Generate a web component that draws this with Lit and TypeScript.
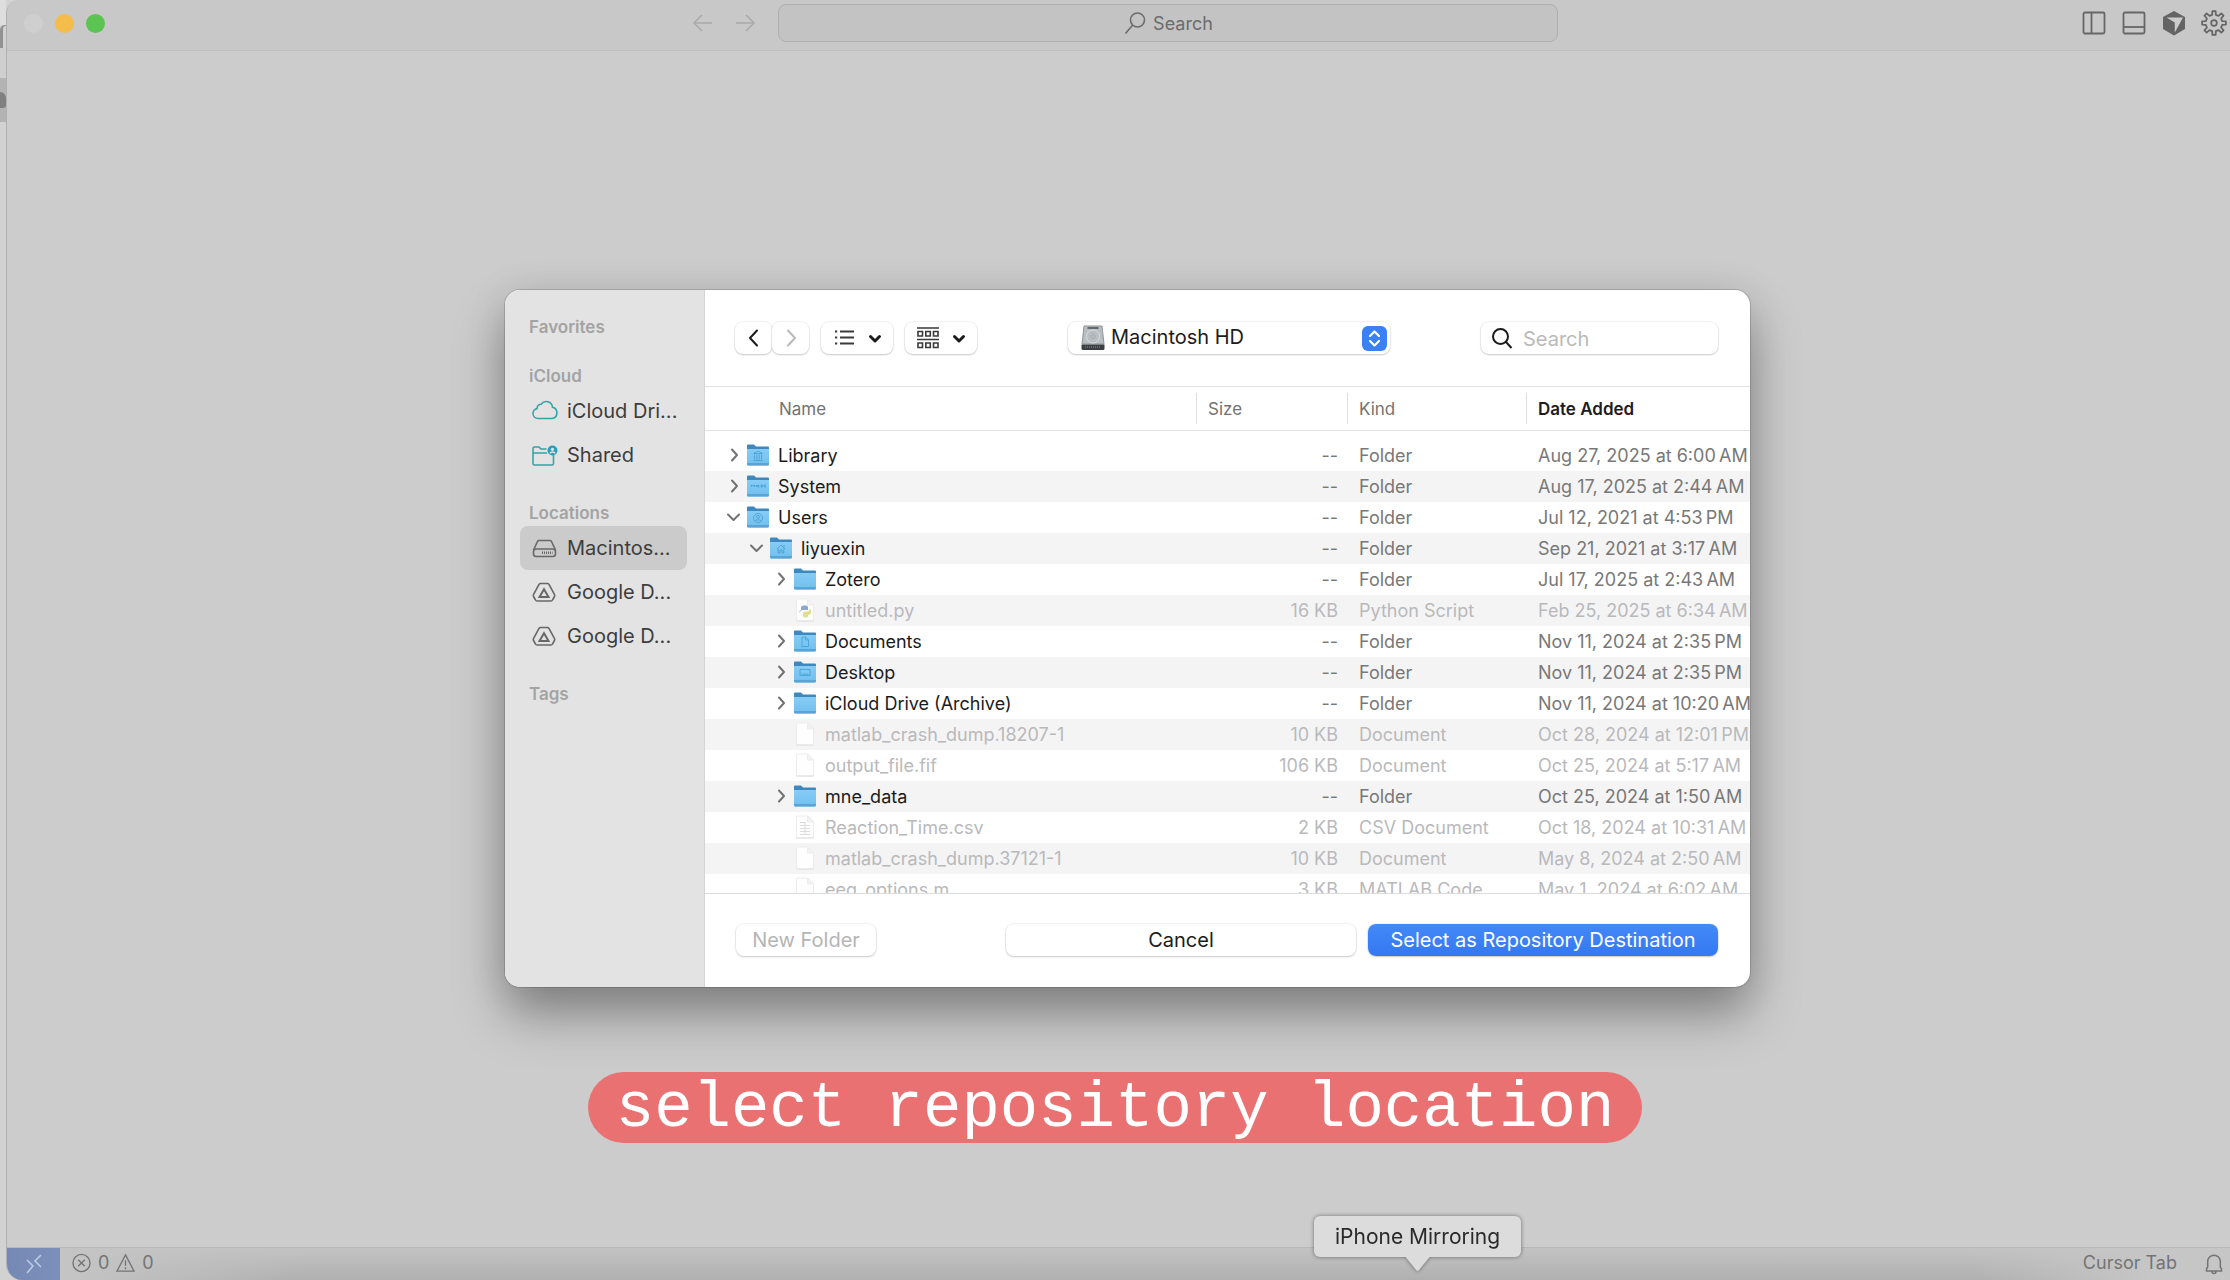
import { LitElement, html, css, svg, nothing } from "lit";
import { customElement, property } from "lit/decorators.js";
import { classMap } from "lit/directives/class-map.js";

type Emblem = "library" | "system" | "users" | "home" | "documents" | "desktop" | "none";
type FileType = "folder" | "python" | "blank" | "lines" | "code";

interface Entry {
  name: string;
  level: number;
  type: FileType;
  emblem?: Emblem;
  open?: boolean;
  size: string;
  kind: string;
  date: string;
  half: "AM" | "PM";
}

const folder = (
  name: string, level: number, date: string, half: "AM" | "PM",
  emblem: Emblem = "none", open = false,
): Entry => ({ name, level, type: "folder", emblem, open, size: "--", kind: "Folder", date, half });

const file = (
  name: string, type: FileType, size: string, kind: string, date: string, half: "AM" | "PM",
): Entry => ({ name, level: 2, type, size, kind, date, half });

const ENTRIES: Entry[] = [
  folder("Library", 0, "Aug 27, 2025 at 6:00", "AM", "library"),
  folder("System", 0, "Aug 17, 2025 at 2:44", "AM", "system"),
  folder("Users", 0, "Jul 12, 2021 at 4:53", "PM", "users", true),
  folder("liyuexin", 1, "Sep 21, 2021 at 3:17", "AM", "home", true),
  folder("Zotero", 2, "Jul 17, 2025 at 2:43", "AM"),
  file("untitled.py", "python", "16 KB", "Python Script", "Feb 25, 2025 at 6:34", "AM"),
  folder("Documents", 2, "Nov 11, 2024 at 2:35", "PM", "documents"),
  folder("Desktop", 2, "Nov 11, 2024 at 2:35", "PM", "desktop"),
  folder("iCloud Drive (Archive)", 2, "Nov 11, 2024 at 10:20", "AM"),
  file("matlab_crash_dump.18207-1", "blank", "10 KB", "Document", "Oct 28, 2024 at 12:01", "PM"),
  file("output_file.fif", "blank", "106 KB", "Document", "Oct 25, 2024 at 5:17", "AM"),
  folder("mne_data", 2, "Oct 25, 2024 at 1:50", "AM"),
  file("Reaction_Time.csv", "lines", "2 KB", "CSV Document", "Oct 18, 2024 at 10:31", "AM"),
  file("matlab_crash_dump.37121-1", "blank", "10 KB", "Document", "May 8, 2024 at 2:50", "AM"),
  file("eeg_options.m", "code", "3 KB", "MATLAB Code", "May 1, 2024 at 6:02", "AM"),
];

const gearPath = (teeth: number): string => {
  const step = (Math.PI * 2) / teeth;
  const pts: string[] = [];
  for (let i = 0; i < teeth; i++) {
    const a = i * step - Math.PI / 2;
    for (const [off, r] of [[-0.28, 8.4], [-0.17, 12], [0.17, 12], [0.28, 8.4]]) {
      const t = a + off * step;
      pts.push(`${(13 + r * Math.cos(t)).toFixed(2)} ${(13 + r * Math.sin(t)).toFixed(2)}`);
    }
  }
  return `M${pts.join("L")}Z`;
};

const emblemShape = (emblem: Emblem) => {
  switch (emblem) {
    case "library":
      return svg`<path d="M7 9.500 11.500 7 16 9.500ZM8 10.500v5M10.300 10.500v5M12.700 10.500v5M15 10.500v5M7 16.500h9"/>`;
    case "system":
      return svg`<path d="M5 12v-2l1.500 1 1.500-1v2M9.500 12v-1.500h1.500V12M13 10.500h-1.500V12H13M14.500 10h1.500v2h-1.500ZM19 10h-1.500v1H19v1h-1.500"/>`;
    case "users":
      return svg`<circle cx="11.500" cy="12" r="4.500"/><circle cx="11.500" cy="10.800" r="1.500"/><path d="M8.700 15c.8-1.600 4.800-1.600 5.600 0"/>`;
    case "home":
      return svg`<path d="M7.500 12 11.500 8l4 4M8.700 11.500V16h1.800v-3h2v3h1.800v-4.500M14.500 8v2"/>`;
    case "documents":
      return svg`<path d="M8.500 7h3.700L15 9.800V16.500H8.500ZM12 7v3h3"/>`;
    case "desktop":
      return svg`<path d="M6.500 8.500h10v6h-10ZM8 13.200h7"/>`;
    default:
      return nothing;
  }
};

@customElement("file-icon")
export class FileIcon extends LitElement {
  static styles = css`
    :host { display: block; width: 24px; height: 24px; }
    svg { display: block; width: 24px; height: 24px; }
    .emblem { fill: none; stroke: #3f9bd0; stroke-width: 1; opacity: 0.75; }
    .page { fill: #fefefe; stroke: #ececee; stroke-width: 1; }
    .fold { fill: #f3f3f4; stroke: #ececee; stroke-width: 1; }
    .base { fill: none; stroke: #dedee0; stroke-width: 1; }
    .mark { fill: none; stroke: #dcdcde; stroke-width: 1; }
  `;

  @property() type: FileType = "blank";
  @property() emblem: Emblem = "none";

  render() {
    if (this.type === "folder") {
      return html`<svg viewBox="0 0 24 24" aria-hidden="true">
        <defs><linearGradient id="front" x1="0" y1="0" x2="0" y2="1">
          <stop offset="0" stop-color="#86ccf5" /><stop offset="1" stop-color="#70bfef" />
        </linearGradient></defs>
        <path d="M1 2.500a1 1 0 0 1 1-1h6l2 2h12a1 1 0 0 1 1 1v6H1Z" fill="#3f88bd" />
        <path d="M1 6h22v15a1.500 1.500 0 0 1-1.500 1.500h-19A1.500 1.500 0 0 1 1 21Z" fill="url(#front)" />
        <path d="M1 20h22v1a1.500 1.500 0 0 1-1.500 1.500h-19A1.500 1.500 0 0 1 1 21Z" fill="#5aa4d3" />
        <g class="emblem" transform="translate(.5 1)">${emblemShape(this.emblem)}</g>
      </svg>`;
    }
    return html`<svg viewBox="0 0 24 24" aria-hidden="true">
      <path class="page" d="M3.500 1h11l6 6v16h-17Z" />
      <path class="fold" d="M14.500 1v6h6Z" />
      <path class="base" d="M3.500 23h17" />
      ${this.type === "python"
        ? svg`<path d="M8 12V9.500q0-2 3-2h2q2 0 2 2V12H9.500Q7 12 7 14.500V15Q5.500 13 8 12Z" fill="#8fa6d2"/>
            <path d="M10 18v-2.500q0-2 2-2h2.500q1.500 0 2-3 2.500 1.500 1 5.500-.5 1-2.500 1v1q0 1.500-2.500 1.500T10 18Z" fill="#dfe08d"/>`
        : nothing}
      ${this.type === "lines"
        ? svg`<path class="mark" d="M7 7.500h6M7 10.500h10M7 13.500h10M7 16.500h10M7 19.500h10M12 7v13"/>`
        : nothing}
    </svg>`;
  }
}

@customElement("file-table")
export class FileTable extends LitElement {
  static styles = css`
    :host { display: block; height: 506px; overflow: hidden; }
    .files { width: 100%; table-layout: fixed; border-collapse: separate; border-spacing: 0; }
    .c-size { width: 151px; }
    .c-kind { width: 179px; }
    .c-date { width: 224px; }
    th, td { box-sizing: border-box; padding: 0; white-space: nowrap; text-align: left; overflow: hidden; }
    th { height: 44px; padding-left: 12px; border-bottom: 1px solid #e2e2e2; color: #737373;
      font-size: 17px; line-height: 22px; font-weight: 400;
      background: linear-gradient(#dedede, #dedede) 0 50% / 1px 31px no-repeat; }
    th.first { padding-left: 74px; background: none; }
    th.sorted { color: #1d1d1d; font-weight: 600; }
    tbody::before { content: "\\200b"; display: block; line-height: 9px; font-size: 1px; }
    td { height: 31px; padding: 0 0 1px 12px; color: #787878; font-size: 18px; line-height: 29px; }
    tr.entry:nth-child(even) td { background: #f4f4f5; }
    td.name { padding-left: 19px; color: #1b1b1b; }
    td.size { padding: 0 9px 1px 0; text-align: right; }
    tr.disabled td { color: #b9b9bb; }
    .line { display: flex; align-items: center; height: 30px; }
    .level-1 { padding-left: 23px; }
    .level-2 { padding-left: 47px; }
    .twist { width: 21px; height: 20px; padding: 0; margin-right: 1px; border: 0; background: none; }
    .twist svg { display: block; width: 20px; height: 20px; }
    .twist path { fill: none; stroke: #727272; stroke-width: 2; stroke-linecap: round; stroke-linejoin: round; }
    .blank { width: 22px; }
    .label { margin-left: 8px; }
  `;

  private row(e: Entry) {
    const isFolder = e.type === "folder";
    return html`<tr class=${classMap({ entry: true, disabled: !isFolder })}>
      <td class="name">
        <div class="line level-${e.level}">
          ${isFolder
            ? html`<button class="twist" aria-label=${`Expand ${e.name}`} aria-expanded=${e.open ? "true" : "false"}>
                <svg viewBox="0 0 20 20"><path d=${e.open ? "M4 7.500 9.500 13l5.500-5.500" : "M8 4.500 13 10l-5 5.500"} /></svg>
              </button>`
            : html`<span class="blank"></span>`}
          <file-icon .type=${e.type} .emblem=${e.emblem ?? "none"}></file-icon>
          <span class="label">${e.name}</span>
        </div>
      </td>
      <td class="size">${e.size}</td>
      <td>${e.kind}</td>
      <td>${e.date}\u2009${e.half}</td>
    </tr>`;
  }

  render() {
    return html`<table class="files">
      <colgroup><col /><col class="c-size" /><col class="c-kind" /><col class="c-date" /></colgroup>
      <thead><tr>
        <th class="first" scope="col">Name</th>
        <th scope="col">Size</th>
        <th scope="col">Kind</th>
        <th class="sorted" scope="col">Date Added</th>
      </tr></thead>
      <tbody>${ENTRIES.map((e) => this.row(e))}</tbody>
    </table>`;
  }
}

const cloudIcon = svg`<path d="M7 20.500a5 5 0 0 1-1-9.900 4 4 0 0 1 4.200-4.300 6.200 6.200 0 0 1 11.300 3 5.700 5.700 0 0 1-.5 11.200Z"/>`;
const sharedIcon = svg`<path d="M22.500 13v8.500a1.500 1.500 0 0 1-1.500 1.500H3.500A1.500 1.500 0 0 1 2 21.500v-15A1.500 1.500 0 0 1 3.500 5H8l2 2h5.500M2 11h14"/>
  <circle cx="21.500" cy="8.500" r="5" fill="#2f9db2" stroke="none"/>
  <circle cx="21.500" cy="7.300" r="1.600" fill="#e3e3e3" stroke="none"/><path d="M19 11.400c.8-1.800 4.200-1.800 5 0" stroke="#e3e3e3"/>`;
const driveIcon = svg`<path d="M2.500 15 6.500 6.500Q7 5.500 8.200 5.500h10.600q1.200 0 1.700 1L24.500 15"/>
  <rect x="2.500" y="14" width="22" height="7.500" rx="2.800"/><path d="M11 17.700h10.500" stroke-dasharray="1 1" stroke-width="2.500"/>`;
const googleIcon = svg`<path d="M9.500 4.500h7q1 0 1.500 1l5.500 10q.5 1 0 2l-2 3.500q-.5 1-1.500 1H6q-1 0-1.500-1l-2-3.500q-.5-1 0-2L8 5.500q.5-1 1.500-1Z"/>
  <path d="M13 10.300 17.500 18h-9Z" stroke-width="2"/>`;

@customElement("app-root")
export class AppRoot extends LitElement {
  static styles = css`
    :host { display: flex; position: relative; min-height: 100vh; overflow: hidden; background: #d2d2d2;
      font-family: Inter, "Liberation Sans", sans-serif; color: #1b1b1b; }
    *, *::before, *::after { box-sizing: border-box; }
    button, input, select { font: inherit; color: inherit; margin: 0; }
    svg { display: block; fill: none; stroke: currentColor; }

    .behind { display: flex; flex-direction: column; width: 6px; flex: none; }
    .behind-top { height: 25px; background: #dedede; }
    .behind-tab { height: 23px; border: solid #929292; border-width: 1px 0 0 3px; border-radius: 5px 0 0 0; }
    .behind-gap { height: 30px; background: #cfcfcf; }
    .behind-row { display: flex; align-items: center; height: 44px; background: #b3b3b3; overflow: hidden; }
    .behind-dot { width: 6px; height: 16px; border-radius: 0 8px 4px 0; background: #808080; }

    .window { display: flex; flex-direction: column; flex: 1; min-width: 0; background: #cccccc;
      border-left: 1px solid #b0b0b0; border-radius: 14px 0 0 16px; overflow: hidden; }

    .titlebar { display: grid; grid-template-columns: 771fr 781fr 672fr; align-items: center;
      height: 51px; padding-bottom: 4px; background: #c8c8c8; border-bottom: 1px solid #bfbfbf; color: #686868; }
    .title-left { display: flex; align-items: center; justify-content: space-between; padding: 0 21px 0 17px; }
    .lights { display: flex; gap: 12px; }
    .light { width: 19px; height: 19px; padding: 0; border: 0; border-radius: 50%; }
    .close { background: #cfcfcf; }
    .minimize { background: #f4bd4b; }
    .zoom { background: #5cc452; }
    .nav { display: flex; gap: 18px; color: #a9a9a9; }
    .plain { padding: 0; border: 0; background: none; color: inherit; }
    .nav svg { width: 24px; height: 24px; stroke-width: 1.5; }
    .command { display: flex; align-items: center; justify-content: center; gap: 6px; height: 38px;
      border: 1px solid #aeaeae; border-radius: 8px; background: #c3c3c3; font-size: 18px; color: #6c6c6c; }
    .command svg { width: 24px; height: 24px; stroke-width: 1.6; }
    .title-right { display: flex; justify-content: flex-end; gap: 14px; padding-right: 3px; color: #666666; }
    .title-right svg { width: 26px; height: 26px; stroke-width: 1.8; }

    .workspace { flex: 1; display: grid; grid-template-columns: 498fr 1245fr 480fr; align-items: start; padding-top: 239px; }
    .dialog { grid-column: 2; display: flex; border-radius: 15px; overflow: hidden; background: #ffffff;
      box-shadow: 0 0 0 1px rgba(0, 0, 0, 0.14), 0 28px 50px rgba(0, 0, 0, 0.34), 0 4px 40px rgba(0, 0, 0, 0.1); }
    .sidebar { width: 200px; flex: none; display: flex; flex-direction: column; gap: 24px;
      padding: 25px 17px 0 15px; background: #e3e3e3; border-right: 1px solid #d4d4d4; }
    .heading { margin: 0; padding-left: 9px; font-size: 17px; line-height: 25px; font-weight: 600; color: #a3a3a3; }
    .place { display: flex; align-items: center; gap: 9px; width: 100%; height: 44px; padding: 0 6px 0 11px;
      border: 0; border-radius: 8px; background: none; font-size: 20px; color: #3d3d3d; text-align: left; }
    .place.selected { background: #cbcbcb; }
    .place svg { width: 27px; height: 27px; flex: none; color: #686868; stroke-width: 1.6; }
    .place.teal svg { color: #35a5a4; }

    .pane { flex: 1; min-width: 0; display: flex; flex-direction: column; }
    .toolbar { display: flex; align-items: center; height: 97px; padding: 0 32px 1px 30px; border-bottom: 1px solid #e2e2e2; }
    .control { height: 32px; padding: 0; border: 0; border-radius: 8px; background: #ffffff;
      box-shadow: 0 0 1px 1px rgba(0, 0, 0, 0.05), 0 1px 2px rgba(0, 0, 0, 0.18); }
    .step { display: flex; align-items: center; justify-content: center; width: 37px; }
    .step svg { width: 22px; height: 22px; stroke-width: 2; stroke-linecap: round; stroke-linejoin: round; }
    .step:disabled { color: #b9b9b9; }
    .view { display: flex; align-items: center; justify-content: center; gap: 13px; width: 72px; margin-left: 12px; }
    .view svg { height: 22px; }
    .glyph { width: 22px; stroke-width: 2; color: #3a3a3a; }
    .arrow { width: 14px; stroke-width: 3; stroke-linecap: round; stroke-linejoin: round; }
    .volume { position: relative; flex: none; width: 322px; margin: 0 auto; }
    .volume select { display: block; width: 100%; height: 32px; padding: 0 44px 2px 43px; appearance: none; font-size: 20px; }
    .disk { position: absolute; left: 13px; top: 3px; width: 24px; height: 26px; pointer-events: none; }
    .updown { position: absolute; right: 3px; top: 4px; width: 25px; height: 25px; pointer-events: none; }
    .find { display: flex; align-items: center; gap: 9px; width: 237px; padding: 0 9px; }
    .find svg { width: 24px; height: 24px; flex: none; stroke-width: 2; }
    .find input { min-width: 0; flex: 1; padding: 2px 0 0; border: 0; outline: 0; background: none; font-size: 20px; }
    .find input::placeholder { color: #bababa; opacity: 1; }

    .footer { display: flex; align-items: center; gap: 12px; height: 94px; padding: 0 32px 1px 31px; border-top: 1px solid #dcdcdc; font-size: 20px; }
    .new-folder { width: 140px; margin-right: auto; color: #b5b5b5; }
    .answer { width: 350px; }
    .primary { background: linear-gradient(#4489f7, #3478f3); color: #ffffff; }

    .statusbar { display: flex; align-items: center; height: 33px; border-top: 1px solid #b8b8b8; font-size: 18px; line-height: 30px; color: #747474;
      background: linear-gradient(90deg, #c4c4c4 60px, rgba(196, 196, 196, 0) 300px calc(100% - 260px), #c6c6c6 calc(100% - 80px)),
        linear-gradient(#c3c3c3, #b0b0b0); }
    .remote { display: grid; place-items: center; width: 53px; height: 32px; border: 0; background: linear-gradient(90deg, #7489b3, #7d8fbb); color: #bccbe4; }
    .remote svg { width: 18px; height: 20px; stroke-width: 1.6; }
    .problems { display: flex; align-items: center; gap: 7px; margin-left: 12px; padding-bottom: 2px; }
    .problems svg { width: 19px; height: 20px; stroke-width: 1.4; }
    .tab-state { margin-left: auto; padding-bottom: 2px; }
    .bell { margin: 0 7px 0 28px; }
    .bell svg { width: 18px; height: 22px; stroke-width: 1.5; }

    .caption { position: absolute; left: 0; right: 0; bottom: 137px; display: flex; justify-content: center; }
    .caption-text { margin: 0; height: 71px; padding: 0 28px; border-radius: 36px; background: #ea7172; color: #ffffff;
      font-family: "Liberation Mono", monospace; font-size: 64px; line-height: 74px; white-space: nowrap; }

    .tooltip { position: absolute; left: 1314px; bottom: 23px; padding: 0 21px; border-radius: 6px; background: #dcdcdc;
      font-size: 21px; line-height: 41px; white-space: nowrap; color: #2a2a2a; filter: drop-shadow(0 0 2px rgba(0, 0, 0, 0.45)); }
    .tooltip::after { content: ""; position: absolute; left: calc(50% - 12px); top: 100%; width: 24px; height: 14px;
      background: inherit; clip-path: polygon(0 0, 100% 0, 56% 92%, 50% 100%, 44% 92%); }
  `;

  private place(label: string, icon: unknown, cls: Record<string, boolean> = {}) {
    return html`<button class=${classMap({ place: true, ...cls })}>
      <svg viewBox="0 0 27 27" aria-hidden="true">${icon}</svg><span>${label}</span>
    </button>`;
  }

  private titlebar() {
    return html`<header class="titlebar">
      <div class="title-left">
        <div class="lights">
          <button class="light close" aria-label="Close"></button>
          <button class="light minimize" aria-label="Minimize"></button>
          <button class="light zoom" aria-label="Zoom"></button>
        </div>
        <div class="nav">
          <button class="plain" aria-label="Go back"><svg viewBox="0 0 24 24"><path d="M21 12H3.500M11 4l-8 8 8 8" /></svg></button>
          <button class="plain" aria-label="Go forward"><svg viewBox="0 0 24 24"><path d="M3 12h17.500M13 4l8 8-8 8" /></svg></button>
        </div>
      </div>
      <button class="command">
        <svg viewBox="0 0 24 24" aria-hidden="true"><circle cx="14.500" cy="9" r="7" /><path d="M9.700 14 2.500 22.500" /></svg>Search
      </button>
      <div class="title-right">
        <button class="plain" aria-label="Toggle side bar"><svg viewBox="0 0 26 26"><rect x="2.500" y="2.500" width="21" height="21" rx="1.500" /><path d="M10.500 2.500v21" /></svg></button>
        <button class="plain" aria-label="Toggle panel"><svg viewBox="0 0 26 26"><rect x="2.500" y="2.500" width="21" height="21" rx="1.500" /><path d="M2.500 17h21" /></svg></button>
        <button class="plain" aria-label="Assistant"><svg viewBox="0 0 26 26"><path d="M13 1 24 7v12l-11 6.500L2 19V7Z" fill="#646464" stroke="none" /><path d="M5.500 7.500h16.500L13.800 22.500V12.500Z" fill="#cccccc" stroke="none" /></svg></button>
        <button class="plain" aria-label="Settings"><svg viewBox="0 0 26 26"><path d=${gearPath(8)} stroke-linejoin="round" /><circle cx="13" cy="13" r="2.800" /></svg></button>
      </div>
    </header>`;
  }

  private toolbar() {
    const down = html`<svg class="arrow" viewBox="0 0 14 22" aria-hidden="true"><path d="M2.500 9.500 7 14l4.500-4.500" /></svg>`;
    return html`<div class="toolbar">
      <button class="control step" aria-label="Back"><svg viewBox="0 0 22 22"><path d="M14 3.500 7 11l7 7.500" /></svg></button>
      <button class="control step" aria-label="Forward" disabled><svg viewBox="0 0 22 22"><path d="M8 3.500 15 11l-7 7.500" /></svg></button>
      <button class="control view" aria-label="List view">
        <svg class="glyph" viewBox="0 0 22 22"><path d="M7 4.500h14M7 10.500h14M7 16.500h14M2 4.500h2.200M2 10.500h2.200M2 16.500h2.200" /></svg>${down}
      </button>
      <button class="control view" aria-label="Group items">
        <svg class="glyph" viewBox="0 0 22 22"><path d="M0 1h22M0 12.500h22" stroke-width="1.500" />
          <path d="M1 4.500h4.500v4.500H1ZM8.800 4.500h4.500v4.500H8.800ZM16.500 4.500h4.500v4.500h-4.500ZM1 16h4.500v4.500H1ZM8.800 16h4.500v4.500H8.800ZM16.500 16h4.500v4.500h-4.500Z" stroke-width="1.600" /></svg>${down}
      </button>
      <div class="volume">
        <select class="control" aria-label="Volume"><option>Macintosh HD</option></select>
        <svg class="disk" viewBox="0 0 24 26" aria-hidden="true">
          <path d="M3 1h18L23 19H1Z" fill="#b9bec2" stroke="#8f9498" />
          <path d="M.5 19.500h23v4a1.500 1.500 0 0 1-1.500 1.500H2A1.500 1.500 0 0 1 .5 23.500Z" fill="#3b3f43" stroke="none" />
          <path d="M4 22h16" stroke="#8e9397" stroke-dasharray="1 1" />
          <path d="M6.500 3h11" stroke="#666b6f" stroke-width="2.200" />
          <circle cx="12" cy="11.500" r="6.500" stroke="#d9dde0" /><circle cx="12" cy="11.500" r="2" stroke="#a4a9ad" />
        </svg>
        <svg class="updown" viewBox="0 0 25 25" aria-hidden="true">
          <rect width="25" height="25" rx="6" fill="#3a80f6" stroke="none" />
          <path d="M8 10 12.500 5.500 17 10M8 15l4.500 4.500L17 15" stroke="#ffffff" stroke-width="2.200" stroke-linecap="round" stroke-linejoin="round" />
        </svg>
      </div>
      <label class="control find">
        <svg viewBox="0 0 24 24" aria-hidden="true"><circle cx="10.500" cy="10.500" r="7.500" /><path d="m16 16 5.500 6" /></svg>
        <input type="search" placeholder="Search" aria-label="Search files" />
      </label>
    </div>`;
  }

  render() {
    return html`
      <div class="behind">
        <div class="behind-top"></div><div class="behind-tab"></div><div class="behind-gap"></div>
        <div class="behind-row"><span class="behind-dot"></span></div>
      </div>
      <div class="window">
        ${this.titlebar()}
        <main class="workspace">
          <section class="dialog" role="dialog" aria-label="Choose folder">
            <nav class="sidebar">
              <section><h2 class="heading">Favorites</h2></section>
              <section>
                <h2 class="heading">iCloud</h2>
                ${this.place("iCloud Dri...", cloudIcon, { teal: true })}
                ${this.place("Shared", sharedIcon, { teal: true })}
              </section>
              <section>
                <h2 class="heading">Locations</h2>
                ${this.place("Macintos...", driveIcon, { selected: true })}
                ${this.place("Google D...", googleIcon)}
                ${this.place("Google D...", googleIcon)}
              </section>
              <section><h2 class="heading">Tags</h2></section>
            </nav>
            <div class="pane">
              ${this.toolbar()}
              <file-table></file-table>
              <div class="footer">
                <button class="control new-folder" disabled>New Folder</button>
                <button class="control answer">Cancel</button>
                <button class="control answer primary">Select as Repository Destination</button>
              </div>
            </div>
          </section>
        </main>
        <footer class="statusbar">
          <button class="remote" aria-label="Open remote window"><svg viewBox="0 0 18 20"><path d="M2 6l6 6-6 7M16 1l-6 6 6 6" /></svg></button>
          <button class="plain problems">
            <svg viewBox="0 0 20 20" aria-hidden="true"><circle cx="10" cy="10" r="9" /><path d="m6.500 6.500 7 7M13.500 6.500l-7 7" /></svg>0
            <svg viewBox="0 0 20 20" aria-hidden="true"><path d="M10 1.500 19 18.500H1ZM10 7v6M10 14.500v2" /></svg>0
          </button>
          <span class="tab-state">Cursor Tab</span>
          <button class="plain bell" aria-label="Notifications"><svg viewBox="0 0 18 22"><path d="M1.500 18V16l1.200-2V8.500a6.300 6.300 0 0 1 12.600 0V14l1.200 2v2ZM7 18.500a2 2 0 0 0 4 0" /></svg></button>
        </footer>
      </div>
      <div class="caption"><p class="caption-text">select repository location</p></div>
      <div class="tooltip" role="tooltip">iPhone Mirroring</div>
    `;
  }
}
